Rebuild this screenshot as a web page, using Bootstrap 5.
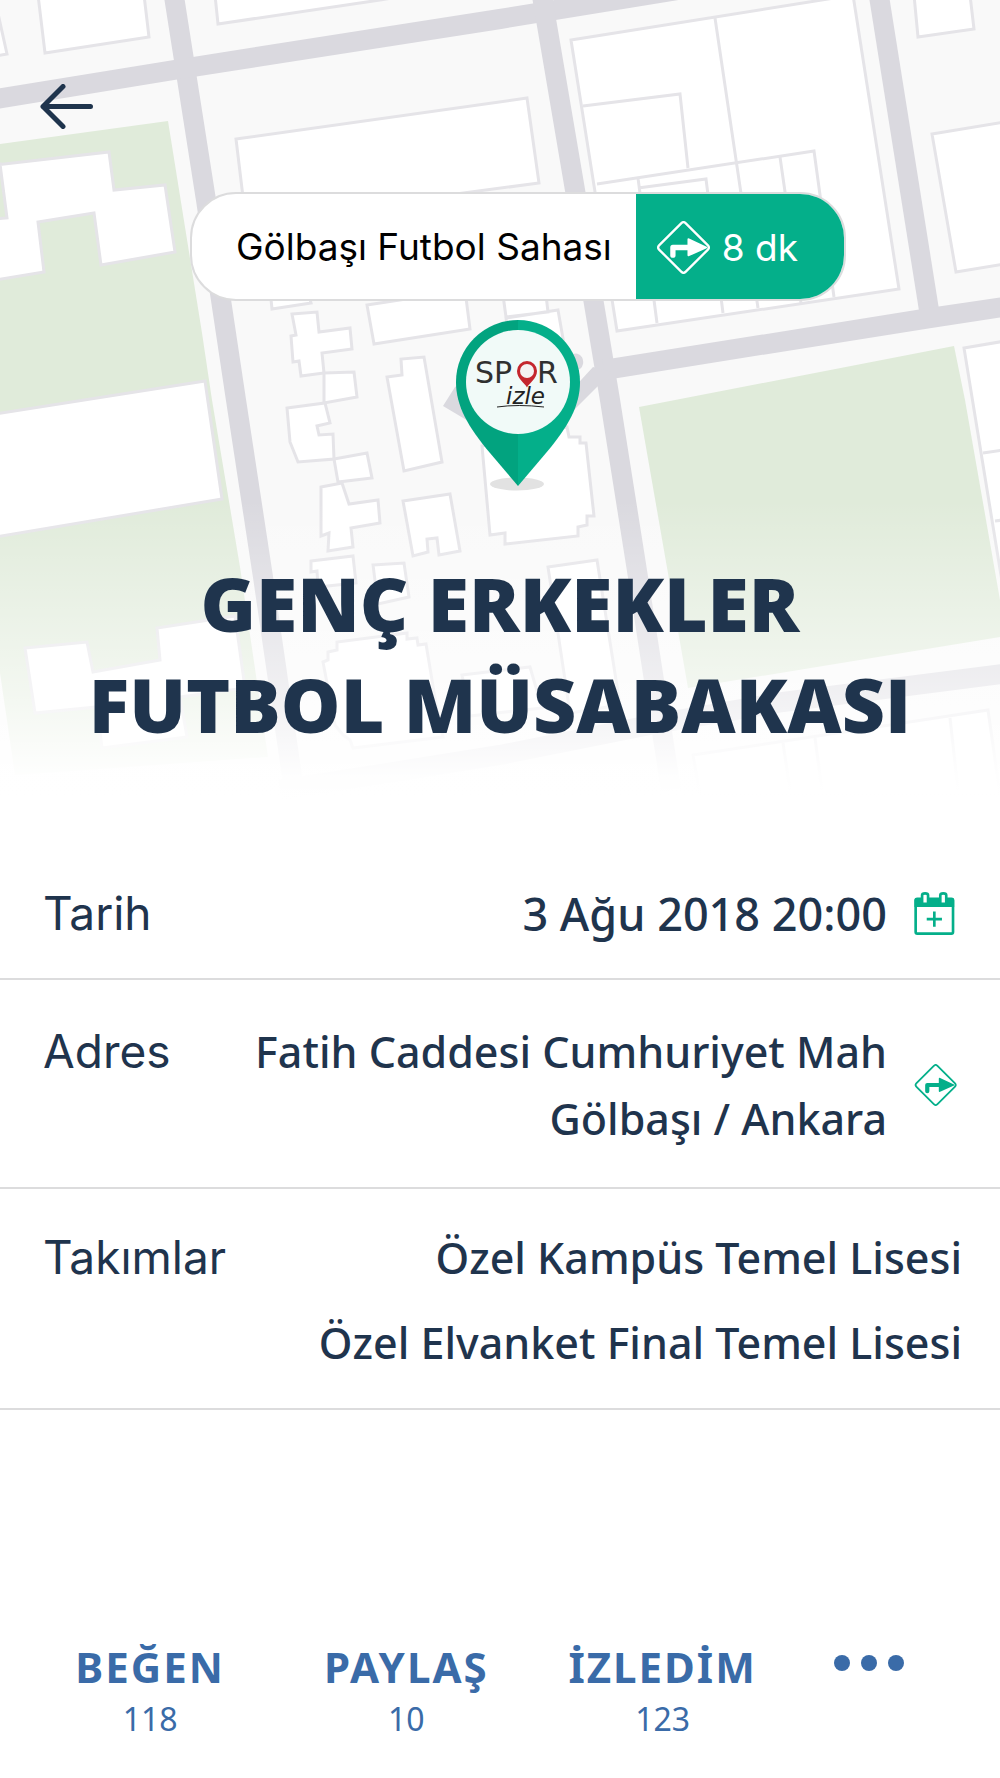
<!DOCTYPE html>
<html lang="tr">
<head>
<meta charset="utf-8">
<meta name="viewport" content="width=device-width, initial-scale=1">
<title>Genç Erkekler Futbol Müsabakası</title>
<link rel="stylesheet" href="https://cdn.jsdelivr.net/npm/bootstrap@5.3.0/dist/css/bootstrap.min.css">
<style>
  :root { --ink: #1f344d; --brand: #04af8a; --action: #3a6ba8; --rule: #dcdcdd; }
  body { font-family: "Noto Sans", "Open Sans", sans-serif; color: var(--ink); background: #fff; }
  .hero { padding-bottom: 86px; }
  .map-bg { z-index: -1; height: 800px; }
  .back-btn { margin: 84px 0 0 40px; line-height: 0; }
  .marker-group { margin-top: 63px; padding-left: 36px; }
  .place-pill { font-family: Inter, sans-serif; font-size: 37px; height: 109px; border: 2px solid var(--rule); border-radius: 46px; color: #000; }
  .place-name { padding: 0 24px 0 44px; }
  .route-btn { font-size: 37px; background: var(--brand); padding: 2px 46px 0 21px; gap: 12px; }
  .marker-pin { margin-top: 19px; }
  .event-title { font-family: "Open Sans", sans-serif; font-weight: 800; font-size: 75px; line-height: 101px; margin-top: 61px; padding-bottom: 1px; }
  .detail { border-bottom: 2px solid var(--rule); padding: 38px 38px 31px 43px; font-size: 43px; line-height: 67px; }
  .detail-date { font-size: 45px; }
  .detail-address { padding-bottom: 35px; }
  .detail-teams { padding: 35px 38px 32px 43px; }
  .detail dt { font-family: Inter, sans-serif; font-weight: 400; font-size: 46px; }
  .detail dd { font-weight: 500; }
  .detail-icon { width: 51px; margin-left: 24px; line-height: 0; }
  .team-list { gap: 18px; }
  .actions { padding: 230px 0 36px 22px; color: var(--action); }
  .action-btn { flex: 0 0 26.2%; color: inherit; }
  .more-btn { flex: 0 0 16%; color: inherit; height: 46px; }
  .action-name { font-weight: 700; font-size: 42px; line-height: 54px; letter-spacing: 2px; }
  .action-count { font-size: 32px; line-height: 44px; margin-top: 3px; }
</style>
</head>
<body>
<main>
  <header class="hero position-relative overflow-hidden">
    <svg class="map-bg position-absolute top-0 start-0 w-100" viewBox="0 0 1000 800" preserveAspectRatio="xMidYMin slice" aria-hidden="true">
      <defs>
        <linearGradient id="fade" x1="0" y1="0" x2="0" y2="1">
          <stop offset="0" stop-color="#fff" stop-opacity="0"/>
          <stop offset=".65" stop-color="#fff" stop-opacity=".62"/>
          <stop offset=".92" stop-color="#fff" stop-opacity=".97"/>
          <stop offset="1" stop-color="#fff"/>
        </linearGradient>
      </defs>
      <rect width="1000" height="800" fill="#f9f9f9"/>
      <g fill="#e0ebda">
        <path d="M0 144 168 121 202 333 212 400 240 567 268 757 15 775 0 673Z"/>
        <path d="M639 407 954 346 965 400 1000 600V637L688 688Z"/>
      </g>
      <g fill="none" stroke="#dad9df" stroke-width="20">
        <path d="M173-10 206 200 236 400 263 577 294 790"/>
        <path d="M-10 100 174 70 500 19 690-12"/>
        <path d="M541-10 575 190 610 400 638 577 671 790"/>
        <path d="M878-10 929 310"/>
        <path d="M604 370 930 318 1010 306"/>
        <path d="M1010 673 783 702 660 723 500 755 280 790"/>
      </g>
      <path fill="#dad9df" d="M593 367 570 392V414L597 387 612 372ZM443 406 455 387 500 360 520 400 480 428ZM572 355a6 7 0 0 1 8 14l-12 2z"/>
      <g fill="#fff" stroke="#e5e4e8" stroke-width="3">
        <path d="M-5 0 7 54-5 56ZM38-5 45 53 149 37 144-5ZM215-5 218 24 380 0 410-5Z"/>
        <path d="M236 139 527 98 539 183 246 222Z"/>
        <path d="M-5 165 109 152 114 190 165 185 175 252 101 265 94 213 38 222 44 272-5 280V219L7 218 0 164Z"/>
        <path d="M-5 414 205 381 222 499-5 537Z"/>
        <path d="M25 648 87 642 93 672 160 660 157 628 235 616 245 688 180 697 187 737 102 748 97 707 35 713Z"/>
        <path d="M270 290 272 309 311 303 306 285Z"/>
        <path d="M292 314 317 312 319 332 350 328 352 349 322 353 324 373 301 376 299 361 293 362 291 336 296 335Z"/>
        <path d="M324 373 354 372 357 397 324 403Z"/>
        <path d="M287 408 325 403 330 423 317 426 319 435 333 434 334 459 298 462 290 442Z"/>
        <path d="M334 459 367 453 372 478 338 482Z"/>
        <path d="M321 487 342 483 349 504 378 500 380 523 351 528 353 547 328 551 329 533 321 536Z"/>
        <path d="M311 561 353 556 356 583 318 587 317 571 311 572Z"/>
        <path d="M373 565 404 563 409 597 378 604Z"/>
        <path d="M367 305 465 290 470 329 374 344Z"/>
        <path d="M387 377 402 375 401 359 424 357 442 462 404 471Z"/>
        <path d="M403 501 450 494 460 551 439 555 437 538 427 539 428 552 413 556Z"/>
        <path d="M482 446 567 427 569 437 580 437V443H586L594 516H587V525L578 527V536L505 544V533L490 535Z"/>
        <path d="M503 295 506 317 548 312 546 295ZM506 318 558 310 565 350 512 356Z"/>
        <path d="M548 567 597 560 620 705 570 713ZM462 675 530 667 542 708 470 716Z"/>
        <path d="M323 662 328 660V652L337 650V642L407 633V639L417 638 418 645 426 644 437 710 443 737 353 748 350 740 343 735 335 725Z"/>
        <path d="M571 40 853-5 899 289 617 331Z"/>
        <path fill="none" d="M715 18 758 308M583 106 680 94 688 168M597 184 814 151 834 297M638 178 657 323M638 188 706 179 723 313M780 157 801 303"/>
        <path d="M914-5 918 37 974 29 970-5ZM932 134 1005 122V264L956 272ZM964 348 1005 341V600Z"/>
        <path fill="none" d="M983 453 1003 450M995 521 1003 520"/>
        <path d="M693 755 988 710 1000 795H700Z"/>
        <path fill="none" d="M783 743 790 790M815 738 822 790M950 718 958 790"/>
      </g>
      <rect y="500" width="1000" height="300" fill="url(#fade)"/>
    </svg>

    <button type="button" class="back-btn btn p-0 border-0 d-block" aria-label="Geri">
      <svg width="53" height="45" viewBox="0 0 53 45" fill="none" stroke="#1f344d" stroke-width="5" stroke-linecap="round" stroke-linejoin="round" aria-hidden="true"><path d="M50.500 22.500H3M23 2.500 3 22.500 23 42.500"/></svg>
    </button>

    <div class="marker-group d-flex flex-column align-items-center">
      <div class="place-pill d-flex bg-white overflow-hidden">
        <span class="place-name d-flex align-items-center text-nowrap">Gölbaşı Futbol Sahası</span>
        <button type="button" class="route-btn btn rounded-0 border-0 text-white d-flex align-items-center text-nowrap">
          <svg width="53" height="53" viewBox="0 0 160 160" aria-hidden="true"><path fill="none" stroke="#fff" stroke-width="7" d="M73 7Q80 0 87 7L153 73Q160 80 153 87L87 153Q80 160 73 153L7 87Q0 80 7 73Z"/><path fill="#fff" d="M40 104V80Q40 72 48 72H92V56Q92 51 97 53L150 78Q154 80 150 82L97 106Q92 108 92 103V88H56V104Q56 111 48 111T40 104Z"/></svg>
          <span>8 dk</span>
        </button>
      </div>
      <svg class="marker-pin" width="124" height="172" viewBox="0 0 124 172" role="img" aria-label="Spor izle">
        <ellipse cx="61" cy="164" rx="27" ry="6.500" fill="#e2e2e2"/>
        <path fill="#04af8a" d="M62 166 90 133C112 107 124 86 124 62A62 62 0 0 0 62 0Z"/>
        <path fill="#02a37f" d="M62 166 34 133C12 107 0 86 0 62A62 62 0 0 1 62 0Z"/>
        <circle cx="62" cy="62" r="52" fill="#f1faf8"/>
        <g fill="#303030" font-family="'DejaVu Sans', sans-serif" font-size="30">
          <text x="19" y="63">SP</text>
          <text x="81" y="63">R</text>
        </g>
        <path fill="#c4262e" d="M71 67.500C69 63 61 59 61 51A10 10 0 0 1 81 51C81 59 73 63 71 67.500Z"/>
        <circle cx="71" cy="51" r="7" fill="#f4f2f2"/>
        <text x="50" y="84" fill="#222" font-family="'DejaVu Sans', sans-serif" font-style="italic" font-size="23">izle</text>
        <path fill="none" stroke="#222" stroke-width="1" d="M41 87Q62 84 88 87"/>
      </svg>
    </div>

    <h1 class="event-title text-center mb-0">GENÇ ERKEKLER<br>FUTBOL MÜSABAKASI</h1>
  </header>

  <dl class="mb-0">
    <div class="detail detail-date d-flex">
      <dt>Tarih</dt>
      <dd class="mb-0 ms-auto text-end">3 Ağu 2018 20:00</dd>
      <dd class="detail-icon mb-0 align-self-center">
        <button type="button" class="btn p-0 border-0" aria-label="Takvime ekle">
          <svg width="48" height="43" viewBox="-10 0 144 130" aria-hidden="true"><g fill="none" stroke="#04af8a"><rect x="3.500" y="21" width="113" height="105" rx="5" stroke-width="8"/><path stroke-width="8" d="M37 82H83M60 59V105"/></g><path fill="#04af8a" d="M0 24Q0 18 6 18H114Q120 18 120 24V45H0Z"/><g fill="#fff" stroke="#04af8a" stroke-width="8"><path d="M23 36V10Q23 4 32 4T41 10V36ZM78 36V10Q78 4 87 4T96 10V36Z"/></g></svg>
        </button>
      </dd>
    </div>
    <div class="detail detail-address d-flex">
      <dt>Adres</dt>
      <dd class="mb-0 ms-auto text-end">Fatih Caddesi Cumhuriyet Mah<br>Gölbaşı / Ankara</dd>
      <dd class="detail-icon mb-0 align-self-center">
        <button type="button" class="btn p-0 border-0" aria-label="Yol tarifi">
          <svg width="48" height="42" viewBox="-14 0 183 160" aria-hidden="true"><path fill="none" stroke="#04af8a" stroke-width="7" d="M73 7Q80 0 87 7L153 73Q160 80 153 87L87 153Q80 160 73 153L7 87Q0 80 7 73Z"/><path fill="#04af8a" d="M40 104V80Q40 72 48 72H92V56Q92 51 97 53L150 78Q154 80 150 82L97 106Q92 108 92 103V88H56V104Q56 111 48 111T40 104Z"/></svg>
        </button>
      </dd>
    </div>
    <div class="detail detail-teams d-flex">
      <dt>Takımlar</dt>
      <dd class="team-list mb-0 ms-auto text-end d-flex flex-column"><span>Özel Kampüs Temel Lisesi</span><span>Özel Elvanket Final Temel Lisesi</span></dd>
    </div>
  </dl>

  <footer class="actions d-flex align-items-start">
    <button type="button" class="action-btn btn p-0 border-0 rounded-0"><span class="action-name d-block">BEĞEN</span><span class="action-count d-block">118</span></button>
    <button type="button" class="action-btn btn p-0 border-0 rounded-0"><span class="action-name d-block">PAYLAŞ</span><span class="action-count d-block">10</span></button>
    <button type="button" class="action-btn btn p-0 border-0 rounded-0"><span class="action-name d-block">İZLEDİM</span><span class="action-count d-block">123</span></button>
    <button type="button" class="more-btn btn p-0 border-0 d-flex align-items-center justify-content-center" aria-label="Diğer">
      <svg width="70" height="16" viewBox="0 0 70 16" fill="#3a6ba8" aria-hidden="true"><circle cx="8" cy="8" r="8"/><circle cx="35" cy="8" r="8"/><circle cx="62" cy="8" r="8"/></svg>
    </button>
  </footer>
</main>
<script src="https://cdn.jsdelivr.net/npm/bootstrap@5.3.0/dist/js/bootstrap.bundle.min.js"></script>
</body>
</html>
